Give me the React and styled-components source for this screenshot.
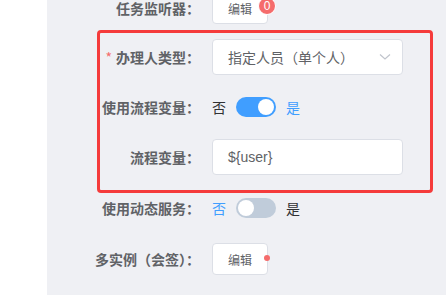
import React from 'react';
import styled, {createGlobalStyle} from 'styled-components';

const GlobalStyle = createGlobalStyle`
  html, body {
    margin: 0;
    padding: 0;
    background: #ffffff;
    overflow: hidden;
  }
  body {
    font-family: 'Liberation Sans', 'Noto Sans CJK SC', sans-serif;
  }
`;

const App = () => {
  return (
    <Page>
      <GlobalStyle />
      <Side />
      <Panel>
        <Form>
          <Row $height={36} $top={-10}>
            <Label>任务监听器：</Label>
            <BadgeWrap>
              <Button>编辑</Button>
              <Badge>0</Badge>
            </BadgeWrap>
          </Row>

          <Highlight>
            <Row $height={36}>
              <Label $required>办理人类型：</Label>
              <Select>
                <span>指定人员（单个人）</span>
                <svg width="12" height="8" viewBox="0 0 12 8">
                  <path d="M1 1.5 L6 6 L11 1.5" fill="none" stroke="#c0c4cc" strokeWidth="1.2" />
                </svg>
              </Select>
            </Row>
            <Row $height={36} $top={14}>
              <Label>使用流程变量：</Label>
              <Switch on />
            </Row>
            <Row $height={36} $top={14}>
              <Label>流程变量：</Label>
              <Input>{'${user}'}</Input>
            </Row>
          </Highlight>

          <Row $height={30}>
            <Label>使用动态服务：</Label>
            <Switch />
          </Row>
          <Row $height={36} $top={18}>
            <Label>多实例（会签）：</Label>
            <BadgeWrap>
              <Button>编辑</Button>
              <Dot />
            </BadgeWrap>
          </Row>
        </Form>
      </Panel>
    </Page>
  );
};

const Switch = ({on}) => (
  <SwitchWrap>
    <SwitchText $active={!on}>否</SwitchText>
    <SwitchCore $on={on}>
      <SwitchKnob $on={on} />
    </SwitchCore>
    <SwitchText $active={on}>是</SwitchText>
  </SwitchWrap>
);

const Page = styled.div`
  display: flex;
  width: 446px;
  height: 295px;
  overflow: hidden;
`;

const Side = styled.div`
  width: 47px;
  flex-shrink: 0;
  background: #ffffff;
`;

const Panel = styled.div`
  flex: 1;
  background: #eff0f4;
  padding-left: 50px;
`;

const Form = styled.div`
  display: flex;
  flex-direction: column;
  width: 336px;
`;

const Highlight = styled.div`
  display: flex;
  flex-direction: column;
  margin-top: 4px;
  padding: 6px 0 15px;
  border: 3px solid #f53b3b;
  border-radius: 4px;
`;

const Row = styled.div`
  display: flex;
  align-items: center;
  height: ${p => p.$height}px;
  margin-top: ${p => p.$top || 0}px;
  padding-left: ${p => p.$inner ? 0 : 0}px;
`;

const Label = styled.div`
  display: flex;
  justify-content: flex-end;
  flex-shrink: 0;
  width: 100px;
  margin-left: 3px;
  padding-right: 12px;
  white-space: nowrap;
  font-family: 'Noto Sans CJK SC', sans-serif;
  font-size: 14px;
  font-weight: 700;
  color: #606266;

  ${Highlight} & {
    margin-left: 0;
  }

  &::before {
    content: ${p => p.$required ? "'*'" : "none"};
    color: #f56c6c;
    margin-right: 4px;
    font-weight: 400;
  }
`;

const BadgeWrap = styled.div`
  position: relative;
  display: inline-flex;
`;

const Button = styled.button`
  height: 32px;
  padding: 0 15px;
  border: 1px solid #dcdfe6;
  border-radius: 4px;
  background: #ffffff;
  color: #606266;
  font-family: 'Noto Sans CJK SC', sans-serif;
  font-size: 12px;
`;

const Badge = styled.sup`
  position: absolute;
  top: 5px;
  left: 46px;
  width: 18px;
  height: 18px;
  margin: 0;
  box-sizing: border-box;
  border: 1px solid #ffffff;
  border-radius: 50%;
  background: #f56c6c;
  color: #ffffff;
  font-family: 'Liberation Sans', sans-serif;
  font-size: 12px;
  line-height: 16px;
  text-align: center;
`;

const Dot = styled.span`
  position: absolute;
  top: 50%;
  right: -2px;
  width: 6px;
  height: 6px;
  margin-top: -4px;
  border-radius: 50%;
  background: #f56c6c;
`;

const Field = styled.div`
  display: flex;
  align-items: center;
  box-sizing: border-box;
  width: 191px;
  height: 36px;
  padding: 0 11px 0 15px;
  border: 1px solid #dcdfe6;
  border-radius: 4px;
  background: #ffffff;
  color: #606266;
  font-size: 14px;
`;

const Select = styled(Field)`
  justify-content: space-between;
  font-family: 'Noto Sans CJK SC', sans-serif;
`;

const Input = styled(Field)`
  font-family: 'Liberation Sans', 'Noto Sans CJK SC', sans-serif;
`;

const SwitchWrap = styled.div`
  display: flex;
  align-items: center;
  gap: 10px;
`;

const SwitchText = styled.span`
  font-family: 'Noto Sans CJK SC', sans-serif;
  font-size: 14px;
  color: ${p => p.$active ? '#409eff' : '#303133'};
`;

const SwitchCore = styled.span`
  position: relative;
  display: inline-block;
  width: 40px;
  height: 20px;
  border-radius: 10px;
  background: ${p => p.$on ? '#409eff' : '#c0ccda'};
`;

const SwitchKnob = styled.span`
  position: absolute;
  top: 2px;
  left: ${p => p.$on ? '22px' : '2px'};
  width: 16px;
  height: 16px;
  border-radius: 50%;
  background: #ffffff;
`;

export default App;
